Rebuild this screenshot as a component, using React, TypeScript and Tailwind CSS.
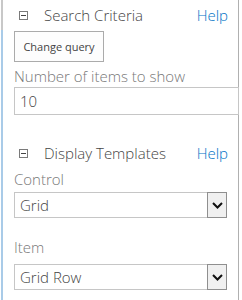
import React from 'react';

const font = { fontFamily: '"Open Sans", "Noto Sans", sans-serif' };

function SectionHeader({ title }: { title: string }) {
  return (
    <div className="flex items-center h-[20px]">
      <div className="ml-[5px] w-[9px] h-[9px] border border-[#7a7a7a] flex items-center justify-center">
        <div className="w-[5px] h-[1px] bg-[#444]" />
      </div>
      <span className="ml-[16px] text-[15px] leading-[20px] text-[#444] font-light">{title}</span>
      <a className="ml-auto mr-[10px] text-[15px] leading-[20px] text-[#0072c6] font-light">Help</a>
    </div>
  );
}

function Select({ value }: { value: string }) {
  return (
    <div className="w-[213px] h-[26px] border border-[#c6c6c6] bg-white flex items-stretch">
      <span className="flex-1 pl-[5px] text-[15px] leading-[24px] text-[#444] font-light">{value}</span>
      <div className="w-[20px] border border-[#8f8f8f] bg-[#f0f0f0] flex items-center justify-center -m-[1px]">
        <svg width="11" height="7" viewBox="0 0 11 7">
          <path d="M1 1 L5.5 5.5 L10 1" fill="none" stroke="#111" strokeWidth="2" />
        </svg>
      </div>
    </div>
  );
}

export default function App() {
  return (
    <div className="w-[242px] h-[300px] bg-white flex overflow-hidden" style={font}>
      {/* left rail */}
      <div className="ml-[1px] w-[2px] flex flex-col">
        <div className="h-[30px] bg-[#c8c8c8]" />
        <div className="flex-1 bg-[#a9cbe8]" />
      </div>

      <div className="ml-[11px] w-[225px] h-full border-r border-[#b0b0b0] flex flex-col">
        <div className="mt-[5px]">
          <SectionHeader title="Search Criteria" />
        </div>

        <button className="mt-[6px] w-[90px] h-[31px] border border-[#ababab] bg-[#fdfdfd] text-[11px] text-[#444] leading-none font-normal">
          Change query
        </button>

        <div className="mt-[5px] text-[15px] leading-[18px] text-[#777] font-light">Number of items to show</div>

        <div className="mt-[2px] w-[225px] h-[28px] border border-[#c6c6c6] pl-[5px] text-[15px] leading-[26px] text-[#444] font-light">
          10
        </div>

        <div className="mt-[28px]">
          <SectionHeader title="Display Templates" />
        </div>

        <div className="mt-[7px] text-[15px] leading-[18px] text-[#777] font-light">Control</div>
        <div className="mt-[4px]">
          <Select value="Grid" />
        </div>

        <div className="mt-[20px] text-[15px] leading-[18px] text-[#777] font-light">Item</div>
        <div className="mt-[8px]">
          <Select value="Grid Row" />
        </div>
      </div>
    </div>
  );
}
